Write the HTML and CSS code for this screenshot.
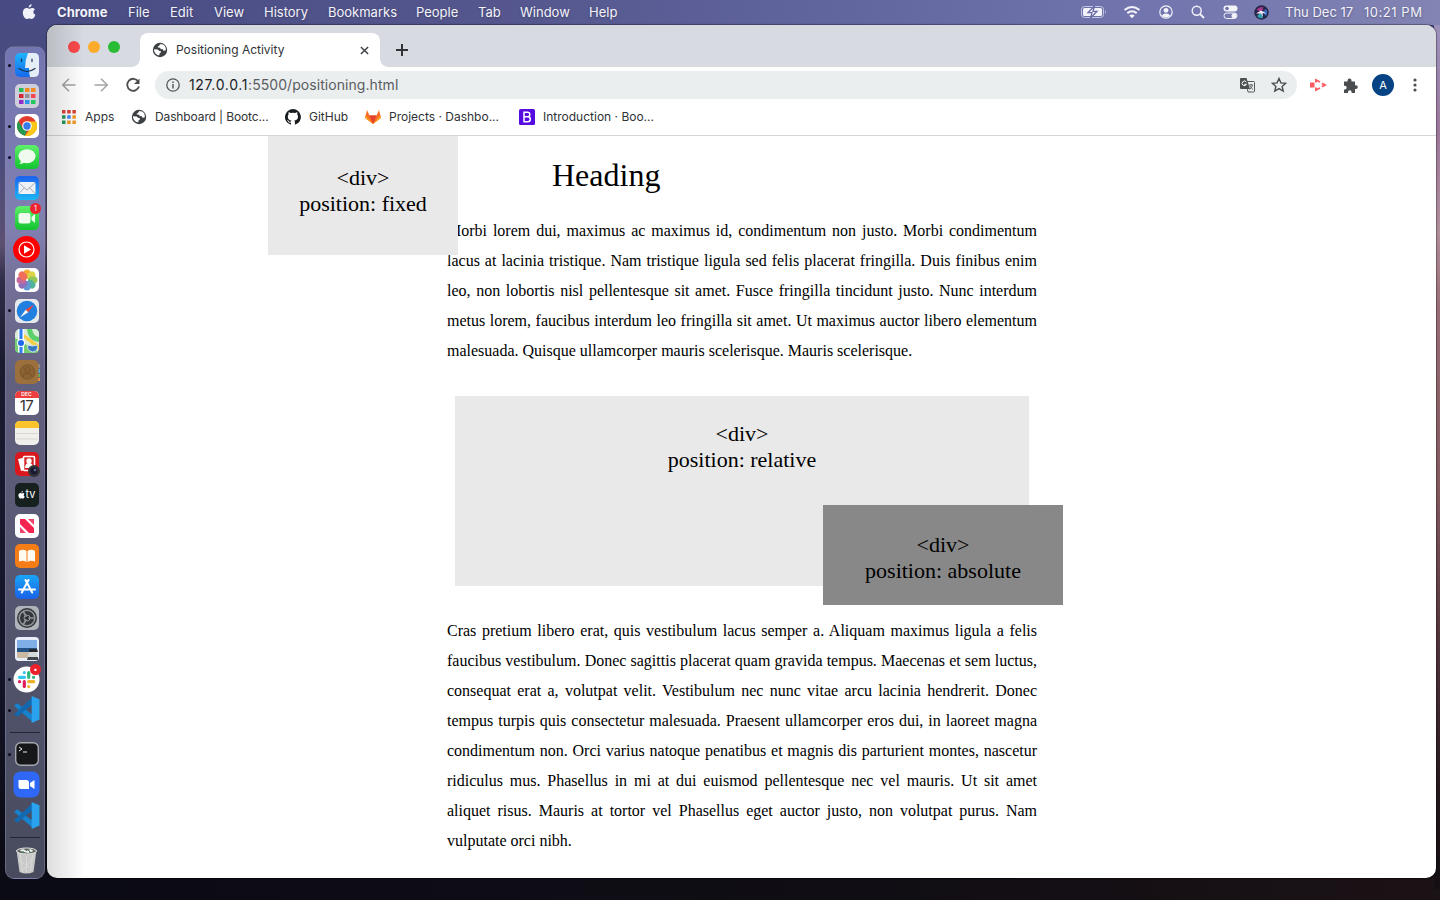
FILE: index.html
```html
<!DOCTYPE html>
<html lang="en">
<head>
<meta charset="utf-8">
<title>Positioning Activity</title>
<link rel="stylesheet" href="styles.css">
</head>
<body>
<svg class="defs" aria-hidden="true">
  <defs>
    <linearGradient id="blue" x2="0" y2="1"><stop stop-color="#1d62ee"/><stop offset="1" stop-color="#1cb7f5"/></linearGradient>
    <linearGradient id="green" x2="0" y2="1"><stop stop-color="#5ff06b"/><stop offset="1" stop-color="#10c42e"/></linearGradient>
    <linearGradient id="finder" x2="0" y2="1"><stop stop-color="#20b4fb"/><stop offset="1" stop-color="#1668ee"/></linearGradient>
    <linearGradient id="store" x2="0" y2="1"><stop stop-color="#1aa5f6"/><stop offset="1" stop-color="#1a62e8"/></linearGradient>
    <symbol id="globe" viewBox="0 0 16 16"><circle cx="8" cy="8" r="7.2" fill="#3c4043"/><path d="M2 7.3l3.8.1 1.5 1.5 1.5.1v1.6l-1.4 1.1v1.6C4 13.300 2 10.600 2 7.300zM8.600 2.100c-.7.700-1.400.700-1.400 1.800l-1.500.5.2 1.200 2.300.1.500 1.600 1.800-.2 1 1.700 2.200-.3c.8-3.300-1.400-6.200-5.100-6.400z" fill="#fff"/></symbol>
    <symbol id="code" viewBox="0 0 26 26"><path d="M19 1v24L1 9.500l3-2.600L19 18z" fill="#1783cf"/><path d="M19 1v7L4 20l-3-2.500z" fill="#1269b0"/><path d="M18 0l7.500 3.200v19.500L18 26z" fill="#2aa2ee"/></symbol>
    <symbol id="apple" viewBox="0 0 14 16"><path d="M9.700.2c.1 1.800-1.400 3.300-3 3.300C6.500 1.900 8 .3 9.700.2zM12.900 5.500c-2.200 1.400-1.900 4.400.5 5.300-.6 1.800-1.900 4.200-3.400 4.200-1 0-1.400-.6-2.600-.6s-1.700.6-2.600.6C3 15.100.800 11.800.800 8.800c0-2.900 1.800-4.700 3.700-4.700 1.200 0 2.100.7 2.800.7.800 0 1.800-.8 3.100-.8 1 0 1.900.5 2.500 1.500z"/></symbol>
  </defs>
</svg>
<header class="menubar">
  <svg class="apple" fill="#f1f1f8"><use href="#apple"/></svg>
  <nav class="menus"><b>Chrome</b><span>File</span><span>Edit</span><span>View</span><span>History</span><span>Bookmarks</span><span>People</span><span>Tab</span><span>Window</span><span>Help</span></nav>
  <div class="status">
    <svg width="26" height="14" viewBox="0 0 26 14"><rect x=".5" y="1.500" width="22" height="11" rx="3" fill="none" stroke="#c4c5df"/><rect x="2" y="3" width="19" height="8" rx="1.500" fill="#f3f3fa"/><path d="M24 5v4q1.500-2 0-4z" fill="#dcdcec"/><path d="M13.500 1L7 7.700h4L9.500 13 16 6.300h-4z" fill="#f8f8ff" stroke="#686ba6" stroke-width="1.300"/></svg>
    <svg width="18" height="14" viewBox="0 0 18 14" fill="none" stroke="#f3f3fa" stroke-width="2"><path d="M1.500 5q7.500-6 15 0M4.300 8.100q4.700-3.800 9.400 0"/><path d="M6.300 10.500Q9 8.500 11.700 10.500L9 13.300z" fill="#f3f3fa" stroke="none"/></svg>
    <svg width="14" height="14" viewBox="0 0 14 14" fill="#f3f3fa"><circle cx="7" cy="7" r="6.200" fill="none" stroke="#f3f3fa" stroke-width="1.200"/><circle cx="7" cy="5.300" r="2.400"/><path d="M2.800 10.700Q4 8.400 7 8.400t4.200 2.300Q7 14 2.800 10.700z"/></svg>
    <svg width="14" height="14" viewBox="0 0 14 14" fill="none" stroke="#f3f3fa" stroke-width="1.400"><circle cx="5.700" cy="5.700" r="4.500"/><path d="M9 9l4 4" stroke-width="1.800"/></svg>
    <svg width="15" height="14" viewBox="0 0 15 14"><rect x=".5" y=".5" width="14" height="6" rx="3" fill="#f3f3fa"/><circle cx="4" cy="3.500" r="1.800" fill="#6f72aa"/><rect x="1" y="8" width="13" height="5.500" rx="2.700" fill="none" stroke="#f3f3fa"/><circle cx="11" cy="10.700" r="2.500" fill="#f3f3fa"/></svg>
    <svg width="15" height="15" viewBox="0 0 15 15"><circle cx="7.500" cy="7.500" r="7.200" fill="#262447"/><path d="M2.500 5q3-4 7-2.500l-2 4.500z" fill="#a83a8d"/><path d="M8 7l4-3q2.500 3 0 7z" fill="#3667bd"/><path d="M3 11l4-4 2 6q-4 1-6-2z" fill="#2f9fae"/><path d="M2 8.500L7 5.500l5.500 3-4-.5.500 4-2-3.500z" fill="#f7eaff"/></svg>
    <time><span>Thu Dec 17</span><span>10:21 PM</span></time>
  </div>
</header>
<div class="desktop">
<aside class="dock">
  <div class="app on"><svg viewBox="0 0 24 24"><rect width="24" height="24" rx="5" fill="url(#finder)"/><path d="M13 0h6q5 0 5 5v14q0 5-5 5h-4q-1-4-1-9h-4q0-8 3-15z" fill="#e5eef7"/><path d="M6.500 6v2.500M17 6v2.500M4 15.500q8 6 16 0" fill="none" stroke="#18324c" stroke-width="1.200" stroke-linecap="round"/></svg></div>
  <div class="app"><svg viewBox="0 0 24 24"><rect width="24" height="24" rx="5" fill="#cfcfdc"/><path fill="#27bd54" d="M4 4h4.500v4H4z"/><path fill="#f08c20" d="M10 4h4.500v4H10zM16 4h4.500v4H16z"/><path fill="#d92335" d="M4 10h4.500v4H4z"/><path fill="#909096" d="M10 10h4.500v4H10z"/><path fill="#f64559" d="M16 10h4.500v4H16z"/><path fill="#8e2fc8" d="M4 16h4.500v4H4z"/><path fill="#2e95ed" d="M10 16h4.500v4H10z"/><path fill="#25c65b" d="M16 16h4.500v4H16z"/></svg></div>
  <div class="app on"><svg viewBox="0 0 24 24"><rect width="24" height="24" rx="5" fill="#fff"/><circle cx="12" cy="12" r="10" fill="#e33b2e"/><path d="M3.300 7L8 14.500 12 16l-2 5.800A10 10 0 013.300 7z" fill="#229b4e"/><path d="M12 7.500h9A10 10 0 0110 21.800L16 14z" fill="#fbc716"/><circle cx="12" cy="12" r="4.800" fill="#fff"/><circle cx="12" cy="12" r="3.700" fill="#377be8"/></svg></div>
  <div class="app on"><svg viewBox="0 0 24 24"><rect width="24" height="24" rx="5" fill="url(#green)"/><ellipse cx="12" cy="11.300" rx="8.500" ry="7" fill="#effbed"/><path d="M6 15q0 3-2 4 4 0 6-2z" fill="#effbed"/></svg></div>
  <div class="app"><svg viewBox="0 0 24 24"><rect width="24" height="24" rx="5" fill="url(#blue)"/><rect x="3.500" y="6" width="17" height="12" rx="1.500" fill="#eef1f5"/><path d="M4 7l8 7 8-7M4 17.500l5.500-6M20 17.500l-5.500-6" fill="none" stroke="#a5adba"/></svg></div>
  <div class="app"><svg viewBox="0 0 24 24"><rect width="24" height="24" rx="5" fill="url(#green)"/><rect x="3.500" y="7" width="12" height="10.500" rx="2.500" fill="#effbed"/><path d="M16.500 11l3.500-3v9l-3.500-3z" fill="#effbed"/></svg><i class="badge">1</i></div>
  <div class="app large"><svg viewBox="0 0 27 27"><circle cx="13.500" cy="13.500" r="13.500" fill="#f00"/><circle cx="13.500" cy="13.500" r="7.500" fill="none" stroke="#fff" stroke-width="1.200"/><path d="M11 9.300l7 4.200-7 4.200z" fill="#fff"/></svg></div>
  <div class="app"><svg viewBox="0 0 24 24"><rect width="24" height="24" rx="5" fill="#fff"/><g opacity=".88"><rect x="8.500" y="1.500" width="7" height="9.500" rx="3.500" fill="#f6a11a"/><rect x="8.500" y="1.500" width="7" height="9.500" rx="3.500" fill="#d9cf2c" transform="rotate(45 12 12)"/><rect x="8.500" y="1.500" width="7" height="9.500" rx="3.500" fill="#83bf3e" transform="rotate(90 12 12)"/><rect x="8.500" y="1.500" width="7" height="9.500" rx="3.500" fill="#3aa98b" transform="rotate(135 12 12)"/><rect x="8.500" y="1.500" width="7" height="9.500" rx="3.500" fill="#4b8dcc" transform="rotate(180 12 12)"/><rect x="8.500" y="1.500" width="7" height="9.500" rx="3.500" fill="#815bb1" transform="rotate(225 12 12)"/><rect x="8.500" y="1.500" width="7" height="9.500" rx="3.500" fill="#c0558d" transform="rotate(270 12 12)"/><rect x="8.500" y="1.500" width="7" height="9.500" rx="3.500" fill="#ee5a45" transform="rotate(315 12 12)"/></g></svg></div>
  <div class="app on"><svg viewBox="0 0 24 24"><rect width="24" height="24" rx="5" fill="#e6e9ec"/><circle cx="12" cy="12" r="10.300" fill="#207fdf"/><path d="M19 5.500l-5.700 7.800-2.600-2.600z" fill="#f04535"/><path d="M5 18.500l5.700-7.800 2.600 2.600z" fill="#f6f6f6"/></svg></div>
  <div class="app"><svg viewBox="0 0 24 24"><rect width="24" height="24" rx="5" fill="#dcebd7"/><path d="M12 0h7q5 0 5 5v8Q13 12 12 0z" fill="#5bcf68"/><path d="M17 0h2q5 0 5 5v3q-6-1-7-8z" fill="#d7edd5"/><path d="M0 9l24 14-5 1H5q-5 0-5-5z" fill="#73cf72"/><path d="M9 9l15 12v-5L9 5z" fill="#f5ce46"/><path d="M3 0h6v24H5l-2-1z" fill="#f4faff"/><path d="M4.500 0h3v24h-3z" fill="#2d7df2"/><circle cx="6" cy="14" r="4" fill="#fff"/><circle cx="6" cy="14" r="3" fill="#1d69ec"/><path d="M13 16q4 2 9 0 2 6-4.500 7Q11 21 13 16z" fill="#357ac3" stroke="#cfdeed"/></svg></div>
  <div class="app"><svg viewBox="0 0 24 24"><path d="M23 4h2v4h-2z" fill="#8d8b86"/><path d="M23 9h2v4h-2z" fill="#49a9dd"/><path d="M23 14h2v3h-2z" fill="#63b65a"/><path d="M23 18h2v3h-2z" fill="#f19342"/><rect width="23.500" height="24" rx="5" fill="#9b703d"/><g fill="#8b6232" stroke="#765128" stroke-width=".8"><circle cx="12.500" cy="12" r="7.300"/><circle cx="12.500" cy="10" r="2.600"/><path d="M7.500 17q1-3.500 5-3.500t5 3.500"/></g></svg></div>
  <div class="app"><div class="calendar"><small>DEC</small><span>17</span></div></div>
  <div class="app"><svg viewBox="0 0 24 24"><rect width="24" height="24" rx="5" fill="#f0efeb"/><path d="M0 7V5q0-5 5-5h14q5 0 5 5v2z" fill="#fbc42c"/><path d="M1 12.500h22M1 18h22" stroke="#d0cfca" stroke-width=".7"/></svg></div>
  <div class="app"><svg viewBox="0 0 24 24"><rect width="24" height="24" rx="5" fill="#db171e"/><path d="M3 7l5-1 2 12-4 1z" fill="#fff"/><rect x="8.500" y="4.500" width="11" height="14" rx="1" fill="#d6232a" stroke="#fff" stroke-width="1.600"/><circle cx="14" cy="9" r="2.700" fill="#fff"/><path d="M10 16q0-5 4-5t4 5z" fill="#fff"/><circle cx="19" cy="19" r="6" fill="#343438"/><circle cx="19" cy="19" r="3.500" fill="#171a2e"/><circle cx="20" cy="18" r="1.300" fill="#636893"/></svg></div>
  <div class="app"><div class="tv"><svg fill="#fff"><use href="#apple"/></svg><span>tv</span></div></div>
  <div class="app"><svg viewBox="0 0 24 24"><rect width="24" height="24" rx="5" fill="#fff"/><path d="M5 5h5l9 9v5h-5l-9-9z" fill="#f52451"/><path d="M13 5h6v6zM5 13l6 6H5z" fill="#ed456c"/></svg></div>
  <div class="app"><svg viewBox="0 0 24 24"><rect width="24" height="24" rx="5" fill="#f57d18"/><path d="M4 7q4-2.500 7.500 0v11Q8 16 4 17.500zM20 7q-4-2.500-7.500 0v11q3.500-2 7.500-.5z" fill="#fffaf0"/></svg></div>
  <div class="app"><svg viewBox="0 0 24 24"><rect width="24" height="24" rx="5" fill="url(#store)"/><path d="M10.500 5l6.700 12.500M13.500 5L6.800 17.500M4 14.500h10M17 14.500h3" fill="none" stroke="#fff" stroke-width="2" stroke-linecap="round"/></svg></div>
  <div class="app"><svg viewBox="0 0 24 24"><rect width="24" height="24" rx="5" fill="#aeb4b9"/><circle cx="12" cy="12" r="10" fill="#34373b"/><g fill="none" stroke="#92979c"><circle cx="12" cy="12" r="7.800" stroke-width="1.500"/><circle cx="12" cy="12" r="3"/><path d="M12 12h8M12 12L8 5M12 12L8 19" stroke-width="1.600"/></g><circle cx="12" cy="12" r="1.500" fill="#26292d"/></svg></div>
  <div class="app"><svg viewBox="0 0 24 24"><rect width="24" height="24" rx="4" fill="#e8effa"/><path d="M2 3h20v8H2z" fill="#80aee6"/><path d="M2 11h20v4H2z" fill="#245487"/><path d="M2 15h20v6H2z" fill="#cbb9a1"/><path d="M14 12h8l1 3h-9z" fill="#26282c"/><path d="M14 15h8l1 8H12z" fill="#d4d8d9"/><path d="M13 20h10v3H12z" fill="#3f464b"/></svg></div>
  <div class="app on large"><svg viewBox="0 0 27 27"><circle cx="13.500" cy="13.500" r="13" fill="#fff"/><g fill="none" stroke-width="3.200" stroke-linecap="round"><path d="M6.500 11.300h5M11.300 6.500v.1" stroke="#36c5f0"/><path d="M15.700 6.500v4.800M20.500 11.300h.1" stroke="#2eb67d"/><path d="M15.700 15.700h5M15.700 20.500v.1" stroke="#ecb22e"/><path d="M11.300 15.700v4.800M6.500 15.700h.1" stroke="#e01e5a"/></g></svg><i class="badge">•</i></div>
  <div class="app on large"><svg><use href="#code"/></svg></div>
  <hr>
  <div class="app on"><svg viewBox="0 0 24 24"><rect x=".7" y=".7" width="22.600" height="22.600" rx="5" fill="#161718" stroke="#a5a8ae" stroke-width="1.400"/><path d="M4 5l3 2-3 2M8 10h4" fill="none" stroke="#eee"/></svg></div>
  <div class="app large"><svg viewBox="0 0 27 27"><rect x=".5" y=".5" width="26" height="26" rx="7" fill="#2f68f6"/><path d="M5.500 9h8q2.500 0 2.500 2.500V18H8q-2.500 0-2.500-2.500zM17 12l4.500-3v9L17 15z" fill="#fff"/></svg></div>
  <div class="app large"><svg><use href="#code"/></svg></div>
  <hr>
  <div class="app large"><svg viewBox="0 0 24 27"><path d="M2 3h20l-3 22q-7 3-14 0z" fill="#c8c9c8"/><path d="M6 8l2 17M12 9v16M18 8l-2 16M4 13l12 8M19 10L8 24" fill="none" stroke="#d9d9d7" stroke-width="1"/><ellipse cx="12" cy="4" rx="10" ry="3" fill="#60655f" stroke="#e6e7e6"/><path d="M5 3l4-1 3 2 4-2 3 2-5 2-6-1z" fill="#e9ece8"/><path d="M8 4l2 2M14 3l2 3" stroke="#27634c"/></svg></div>
</aside>
<section class="window">
  <div class="tabs">
    <div class="lights"><i></i><i></i><i></i></div>
    <div class="tab"><svg class="s16"><use href="#globe"/></svg><span>Positioning Activity</span><svg class="close" viewBox="0 0 10 10"><path d="M1 1l8 8M9 1L1 9" stroke="#3c4043" stroke-width="1.600"/></svg></div>
    <svg class="plus" viewBox="0 0 12 12"><path d="M6 0v12M0 6h12" stroke="#303236" stroke-width="2"/></svg>
  </div>
  <div class="toolbar">
    <svg class="s16" viewBox="0 0 16 16" fill="none" stroke="#a2a4a6" stroke-width="1.500"><path d="M14.500 8h-13M8 1.700L1.700 8 8 14.300"/></svg>
    <svg class="s16" viewBox="0 0 16 16" fill="none" stroke="#a2a4a6" stroke-width="1.500"><path d="M1.500 8h13M8 1.700L14.300 8 8 14.300"/></svg>
    <svg class="s16" viewBox="0 0 16 16"><path d="M13.300 4.500a6 6 0 10.700 5" fill="none" stroke="#4a4d50" stroke-width="1.800"/><path d="M14.500 1.500V7H9z" fill="#4a4d50"/></svg>
    <div class="address">
      <svg class="s14" viewBox="0 0 14 14"><circle cx="7" cy="7" r="6.200" fill="none" stroke="#54585c" stroke-width="1.300"/><path d="M7 6v4.500M7 3.500v1.500" stroke="#54585c" stroke-width="1.500"/></svg>
      <span class="url"><b>127.0.0.1</b>:5500/positioning.html</span>
      <svg class="translate" viewBox="0 0 15 15"><path d="M6 3.500h7.500q1 0 1 1v8.500q0 1-1 1H8z" fill="#eceff0" stroke="#55585b"/><path d="M1 0h5.500L10 11H1Q0 11 0 10V1Q0 0 1 0z" fill="#4c5053"/><path d="M6.300 4a2.300 2.300 0 10.200 2.300H4.300" fill="none" stroke="#fff"/><path d="M9 7h4M11 6v1M12.500 7q-.5 3-3 4.500M10 8q1 2 3 3.500" fill="none" stroke="#55585b" stroke-width=".9"/></svg>
      <svg class="star" viewBox="0 0 16 16"><path d="M8 1.500l1.900 4.400 4.800.4-3.600 3.100 1.100 4.700L8 11.600l-4.200 2.500 1.100-4.700-3.600-3.100 4.800-.4z" fill="none" stroke="#4a4d50" stroke-width="1.400"/></svg>
    </div>
    <svg class="cast" viewBox="0 0 17 14"><path d="M0 4.500h4.500v5H0z" fill="#fb5c61"/><path d="M6 4.500V2l4 2M12 5.300L15 7l-3 1.700M10 10l-4 2V9.500" fill="none" stroke="#fb5c61" stroke-width="1.900"/></svg>
    <svg class="puzzle" viewBox="0 0 15 15"><path d="M1 3.500h3.500v-1q0-2 2-2t2 2v1H12v3.700h.8q2 0 2 1.900t-2 1.900H12v4H8.600v-1q0-1.800-1.800-1.800T5 14v1H1v-3.500h.8q1.900 0 1.900-1.900T1.800 7.700H1z" fill="#4b4e51"/></svg>
    <span class="avatar">A</span>
    <svg class="more" viewBox="0 0 4 14" fill="#4b4e51"><circle cx="2" cy="2" r="1.600"/><circle cx="2" cy="7" r="1.600"/><circle cx="2" cy="12" r="1.600"/></svg>
  </div>
  <div class="bookmarks">
    <a><svg class="s14" viewBox="0 0 14 14"><path fill="#db4437" d="M0 0h3.500v3.500H0zM5.200 0h3.500v3.500H5.200zM10.400 0h3.500v3.500h-3.500z"/><path fill="#229858" d="M0 5.200h3.500v3.500H0zM0 10.400h3.500v3.500H0z"/><path fill="#4285f4" d="M5.200 5.200h3.500v3.500H5.200z"/><path fill="#f29b25" d="M10.400 5.200h3.500v3.500h-3.500zM5.200 10.400h3.500v3.500H5.200zM10.400 10.400h3.500v3.500h-3.500z"/></svg><span>Apps</span></a>
    <a><svg class="s16"><use href="#globe"/></svg><span class="tight">Dashboard | Bootc...</span></a>
    <a><svg class="s16" viewBox="0 0 16 16"><path d="M8 0a8 8 0 00-2.500 15.600c.4.100.5-.2.500-.4v-1.500c-2.200.5-2.700-.9-2.700-.9-.4-.9-.9-1.200-.9-1.200-.7-.5.100-.5.100-.5.800.1 1.200.8 1.200.8.700 1.200 1.900.9 2.300.7.100-.5.300-.9.500-1.100-1.800-.2-3.700-.9-3.700-4 0-.9.300-1.600.8-2.100 0-.2-.3-1 .1-2.100 0 0 .7-.2 2.200.8a7.700 7.700 0 014.100 0c1.500-1 2.200-.8 2.200-.8.400 1.100.1 1.900 0 2.100.5.600.8 1.300.8 2.100 0 3.100-1.900 3.700-3.700 4 .3.300.6.800.6 1.500v2.200c0 .2.100.5.500.4A8 8 0 008 0z" fill="#191c20"/></svg><span>GitHub</span></a>
    <a><svg class="s16" viewBox="0 0 16 16"><path d="M8 15L0 9l2-8 2.500 5.500h7L14 1l2 8z" fill="#fc6d26"/><path d="M8 15L4.500 6.500h7z" fill="#e24329"/><path d="M8 15L0 9l.7-2.500zM8 15l8-6-.7-2.500z" fill="#fca326"/></svg><span>Projects · Dashbo...</span></a>
    <a><svg class="s16" viewBox="0 0 16 16"><rect width="16" height="16" rx="1.500" fill="#560be0"/><path d="M5 3.200h3.500q2.300 0 2.300 2.200T8.500 7.700H5h3.800q2.500 0 2.500 2.500t-2.500 2.500H5z" fill="none" stroke="#fff" stroke-width="1.500"/></svg><span>Introduction · Boo...</span></a>
  </div>
  <main class="page">
    <div class="fixed">&lt;div&gt;<br>position: fixed</div>
    <article>
      <h1>Heading</h1>
      <p><span>Morbi lorem dui, maximus ac maximus id, condimentum non justo. Morbi condimentum</span><span>lacus at lacinia tristique. Nam tristique ligula sed felis placerat fringilla. Duis finibus enim</span><span>leo, non lobortis nisl pellentesque sit amet. Fusce fringilla tincidunt justo. Nunc interdum</span><span>metus lorem, faucibus interdum leo fringilla sit amet. Ut maximus auctor libero elementum</span><span>malesuada. Quisque ullamcorper mauris scelerisque. Mauris scelerisque.</span></p>
      <div class="relative">&lt;div&gt;<br>position: relative<div class="absolute">&lt;div&gt;<br>position: absolute</div></div>
      <p><span>Cras pretium libero erat, quis vestibulum lacus semper a. Aliquam maximus ligula a felis</span><span>faucibus vestibulum. Donec sagittis placerat quam gravida tempus. Maecenas et sem luctus,</span><span>consequat erat a, volutpat velit. Vestibulum nec nunc vitae arcu lacinia hendrerit. Donec</span><span>tempus turpis quis consectetur malesuada. Praesent ullamcorper eros dui, in laoreet magna</span><span>condimentum non. Orci varius natoque penatibus et magnis dis parturient montes, nascetur</span><span>ridiculus mus. Phasellus in mi at dui euismod pellentesque nec vel mauris. Ut sit amet</span><span>aliquet risus. Mauris at tortor vel Phasellus eget auctor justo, non volutpat purus. Nam</span><span>vulputate orci nibh.</span></p>
    </article>
  </main>
</section>
</div>
</body>
</html>
```
FILE: styles.css
```css
* { box-sizing: border-box; }
body {
  margin: 0;
  width: 1440px;
  height: 900px;
  overflow: hidden;
  display: flex;
  flex-direction: column;
  font-family: Inter, "Liberation Sans", sans-serif;
  background:
    linear-gradient(#9c91bb 25px, #9e789c 120px, #b18f9c 220px, #996d75 300px, #81595f 480px, #54363d 620px, #24171d 780px, #150f14 870px) right / 6px 878px no-repeat,
    linear-gradient(90deg, #0b0b15, #100d14 60%, #1b1215) bottom / 100% 24px no-repeat,
    linear-gradient(#484b80 25px, #4b4d7d 160px, #5d5072 245px, #302d49 280px, #1b1b31 360px, #15162a 650px, #0b0b15 860px);
}
.defs { position: absolute; width: 0; height: 0; }
svg { display: block; flex: none; }
.s16 { width: 16px; height: 16px; }
.s14 { width: 14px; height: 14px; }

.menubar {
  height: 25px;
  flex: none;
  padding-bottom: 1px;
  display: flex;
  align-items: center;
  justify-content: space-between;
  color: #f3f3fa;
  font-size: 13px;
  background: linear-gradient(90deg, #484b83, #54568d 35%, #6367a0 60%, #7275ae 80%, #8284b3);
  text-shadow: 0 1px 2px #30305088;
}
.apple { width: 14px; height: 16px; margin-left: 22px; }
.menus {
  flex: 1;
  margin-left: 21px;
  display: grid;
  grid-template-columns: 71px 42px 44px 50px 64px 88px 62px 42px 69px 50px;
  white-space: nowrap;
}
.menus b { font-weight: 700; letter-spacing: .05px; }
.status { display: flex; align-items: center; margin-right: 18px; }
.status svg:nth-child(1) { margin-right: 16px; }
.status svg:nth-child(2) { margin-right: 18px; }
.status svg:nth-child(3) { margin-right: 18px; }
.status svg:nth-child(4) { margin-right: 18px; }
.status svg:nth-child(5) { margin-right: 16px; }
.status svg:nth-child(6) { margin-right: 16px; }
.status time { display: flex; justify-content: space-between; width: 137px; white-space: nowrap; }
.status time span:last-child { letter-spacing: .55px; margin-right: -.5px; }

.desktop { flex: 1; min-height: 0; display: flex; align-items: flex-start; }
.dock {
  width: 40px;
  height: 833px;
  margin: 21px 2px 0 5px;
  padding-top: 2.500px;
  border-radius: 9px;
  border: 1px solid #8b8baa77;
  background: linear-gradient(#7375b2, #8080b0 180px, #74709a 235px, #62607f 330px, #555772 540px, #484a5d);
}
.app {
  position: relative;
  height: 30.72px;
  display: grid;
  place-items: center;
  padding-left: 3px;
}
.app > svg { width: 24px; height: 24px; overflow: visible; }
.app.large { padding-left: 2px; }
.app.large > svg { width: 27px; height: 27px; }
.app.on::before {
  content: "";
  position: absolute;
  left: 1.500px;
  top: 14px;
  width: 3px;
  height: 3px;
  border-radius: 50%;
  background: #0d0c20;
}
.dock hr { width: 30px; height: 1px; margin: 6.300px auto; border: 0; background: #242539; }
.badge {
  position: absolute;
  right: 3px;
  top: 0;
  width: 11px;
  height: 11px;
  border-radius: 50%;
  background: #ee222d;
  color: #fff;
  font: 7px/11px Inter, sans-serif;
  text-align: center;
}
.calendar { width: 24px; height: 24px; border-radius: 5px; overflow: hidden; background: #fff; text-align: center; color: #333; }
.calendar small { display: block; height: 7px; background: #ee3f40; color: #fff; font: 600 5px/7px Inter, sans-serif; }
.calendar span { display: block; font: 15px/16px Inter, sans-serif; letter-spacing: -.5px; }
.tv { width: 24px; height: 24px; border-radius: 5px; background: #15201f; color: #fff; display: flex; align-items: center; justify-content: center; gap: 1px; font-size: 11px; }
.tv svg { width: 7px; height: 8px; }
.tv span { margin-top: -1px; }

.window {
  width: 1389px;
  height: 853px;
  border-radius: 10px;
  overflow: hidden;
  background: #fff;
  position: relative;
  color: #303236;
  box-shadow: 0 0 1px 1px #0005;
}
.window::after {
  content: "";
  position: absolute;
  inset: 0 auto 0 0;
  width: 38px;
  background: linear-gradient(90deg, #0002, #0000);
  pointer-events: none;
}
.tabs { height: 42px; background: #d7dae1; display: flex; }
.lights { width: 93px; padding: 16px 0 0 21px; display: flex; gap: 8px; }
.lights i { width: 12px; height: 12px; border-radius: 50%; background: #f9494b; }
.lights i:nth-child(2) { background: #fcab2a; }
.lights i:nth-child(3) { background: #28bd35; }
.tab {
  width: 240px;
  height: 34px;
  margin-top: 8px;
  padding: 0 11px 0 12px;
  border-radius: 8px 8px 0 0;
  background: #fff;
  display: flex;
  align-items: center;
  gap: 8px;
  font-size: 12px;
  position: relative;
}
.tab::before, .tab::after {
  content: "";
  position: absolute;
  bottom: 0;
  width: 8px;
  height: 8px;
  left: -8px;
  background: radial-gradient(circle at 0 0, transparent 7.500px, #fff 8px);
}
.tab::after { left: auto; right: -8px; transform: scaleX(-1); }
.tab span { flex: 1; white-space: nowrap; margin-bottom: 2px; }
.close { width: 9px; height: 9px; }
.plus { width: 12px; height: 12px; margin: 19px 0 0 16px; }
.toolbar { height: 36px; display: flex; align-items: center; padding: 0 18px 0 14px; }
.toolbar > .s16 { margin-right: 16px; }
.toolbar > .s16:nth-child(3) { margin-right: 14px; }
.address { width: 1142px; height: 28px; border-radius: 14px; background: #ebeeef; display: flex; align-items: center; padding: 0 11px; }
.url { flex: 1; margin: 0 0 1px 9px; font-size: 14px; letter-spacing: .06px; color: #5a5d61; }
.url b { font-weight: 400; letter-spacing: .65px; color: #202124; }
.translate { width: 15px; height: 15px; margin-right: 16px; }
.star { width: 16px; height: 16px; margin-right: -1px; }
.cast { width: 17px; height: 14px; margin-left: 13px; }
.puzzle { width: 15px; height: 15px; margin-left: 16px; }
.avatar { width: 22px; height: 22px; margin-left: 14px; border-radius: 50%; background: #064384; color: #fff; display: grid; place-items: center; font-size: 11px; }
.more { width: 4px; height: 14px; margin-left: 19px; }
.bookmarks {
  height: 33px;
  padding: 0 0 4px 15px;
  display: grid;
  grid-template-columns: 69px 154px 80px 154px 200px;
  align-items: center;
  border-bottom: 1px solid #d4d6d9;
  font-size: 12px;
}
.bookmarks a { display: flex; align-items: center; gap: 8px; white-space: nowrap; }
.bookmarks a:first-child { gap: 9px; }
.bookmarks span { margin-bottom: 1px; }
.tight { letter-spacing: -.12px; }

.page { position: relative; height: 742px; font: 16px/30px "Liberation Serif", serif; color: #000; }
article { width: 590px; margin: 0 auto; padding-top: 19px; position: relative; left: .5px; }
h1 { margin: 0 0 21px 105px; font-size: 32px; line-height: 40px; font-weight: 400; }
p { margin: 0; }
p span { display: block; white-space: nowrap; text-align-last: justify; }
p span:last-child { text-align-last: left; }
.fixed, .relative, .absolute { font-size: 22px; line-height: 26px; text-align: center; }
.fixed { position: absolute; z-index: 1; left: 221px; top: 0; width: 190px; height: 119px; padding-top: 29px; background: #e9e9e9; }
.relative { position: relative; width: 574px; height: 190px; margin: 30px 8px; padding-top: 25px; background: #e9e9e9; }
.absolute { position: absolute; right: -34px; bottom: -19px; width: 240px; height: 100px; padding-top: 27px; background: #888; }
```
